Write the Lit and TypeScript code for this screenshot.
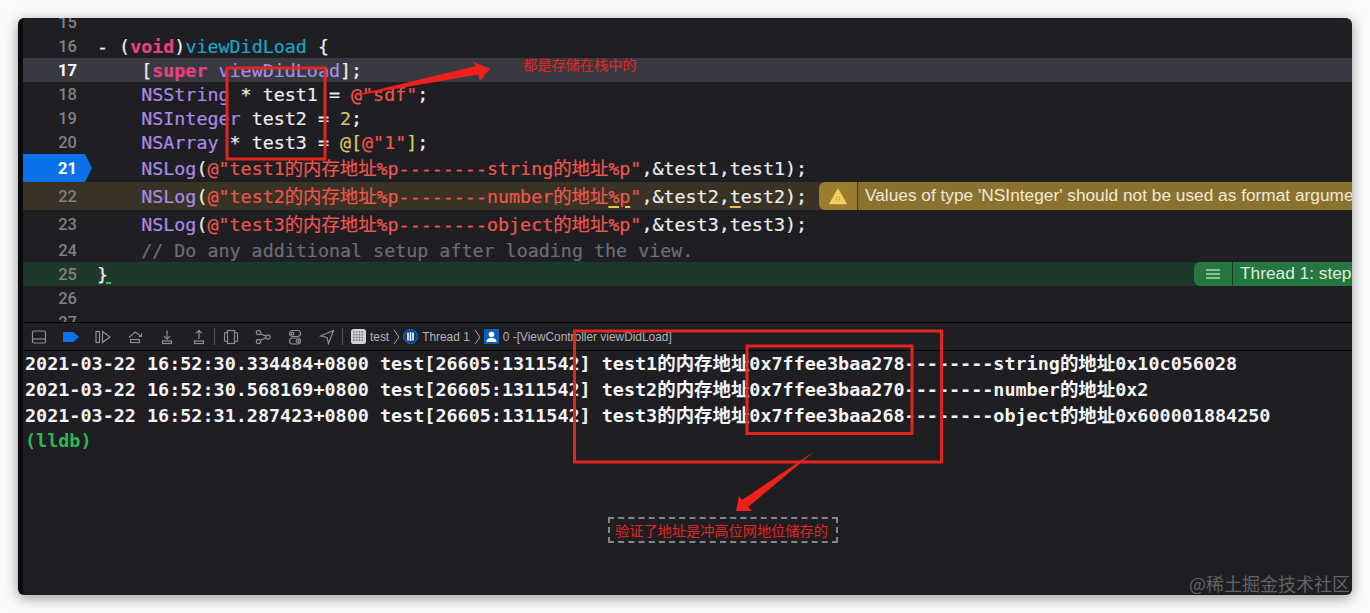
import { LitElement, html, css, svg } from "lit";
import { customElement } from "lit/decorators.js";

const icon = (body: unknown) => html`<svg class="ic" viewBox="0 0 16 16">${body}</svg>`;

@customElement("app-root")
export class AppRoot extends LitElement {
  static styles = css`
    :host { display: block; position: relative; width: 1370px; height: 613px; background: #fbfbfb; overflow: hidden; padding: 18px 18px 18px 18px; box-sizing: border-box; }
    .win { height: 577px; border-radius: 6px; overflow: hidden; background: #1e1e23; border-left: 5px solid #0b0b0d; box-shadow: 0 3px 14px rgba(0,0,0,.4); display: flex; flex-direction: column; box-sizing: border-box; }
    .editor { height: 304px; flex: none; overflow: hidden; font-family: "DejaVu Sans Mono", "Noto Sans CJK SC", monospace; font-size: 18.35px; color: #eeeef0; }
    .rows { margin-top: -8px; }
    .row { position: relative; display: flex; align-items: center; height: 24px; white-space: pre; }
    .tall { height: 28px; }
    .tall .code { margin-top: -2px; }
    .num { flex: none; width: 54px; margin-right: 20px; text-align: right; font: 500 16.5px Roboto, sans-serif; color: #808085; position: relative; }
    .code { flex: none; position: relative; -webkit-text-stroke: 0.2px currentColor; }
    .cur { background: #393a41; }
    .cur .num { color: #fff; font-weight: 700; }
    .warnrow { background: #383325; }
    .greenrow { background: #1e392a; }
    .bp { position: absolute; left: 0; top: 0; width: 69px; height: 28px; background: #0a71e8; clip-path: polygon(0 0, 62px 0, 69px 14px, 62px 28px, 0 28px); }
    .bpnum { color: #fff; font-weight: 700; }
    .k { color: #e9417f; font-weight: 700; }
    .m { color: #1aa6c4; }
    .c { color: #a98bea; }
    .s { color: #f0564f; }
    .y { color: #d8c868; }
    .g { color: #6a6e78; }
    .u { text-decoration: underline #e8c24a 2px; text-underline-offset: 3px; }
    .caret { display: inline-block; width: 5px; height: 2px; background: #2ec45a; margin-left: -2px; vertical-align: -3px; }
    .pill { position: absolute; top: 0; bottom: 0; display: flex; align-items: stretch; font-family: "Liberation Sans", Arial, sans-serif; overflow: hidden; white-space: nowrap; right: 0; }
    .warn { left: 796px; color: #f1ead6; font-size: 17.3px; }
    .warn .lead { background: #9a7d33; border-radius: 6px 0 0 6px; }
    .warn .msg { background: #8a7130; }
    .thread { left: 1171px; color: #d9ecdf; font-size: 17.3px; }
    .thread .lead { background: #25773f; border-radius: 6px 0 0 6px; }
    .thread .msg { background: #25773f; }
    .lead { flex: none; width: 38px; margin-right: 1px; display: flex; align-items: center; justify-content: center; }
    .msg { flex: 1; padding-left: 7px; line-height: 27px; overflow: hidden; }
    .thread .msg { line-height: 23px; }
    .bar { flex: none; height: 29px; box-sizing: border-box; border-top: 1px solid #050506; border-bottom: 1px solid #050506; display: flex; align-items: center; background: #1e1e23; font: 11.9px "Liberation Sans", sans-serif; color: #b4b4b8; white-space: nowrap; }
    .btn { flex: none; width: 32px; display: flex; justify-content: center; align-items: center; }
    .ic { width: 16px; height: 16px; fill: none; stroke: #8e8e93; stroke-width: 1.2; display: block; }
    .sep { flex: none; width: 1px; height: 17px; background: #55555a; margin-left: -1px; }
    .crumb { margin-left: 8px; display: flex; align-items: center; }
    .crumb svg { flex: none; display: block; }
    .crumb span { margin-left: 4px; }
    .chev { width: 7px; height: 16px; fill: none; stroke: #a5a5a9; stroke-width: 1; margin: 0 3px 0 4px; }
    .console { flex: 1; padding: 0 0 0 2px; font: 700 18.43px/26px "DejaVu Sans Mono", "Noto Sans CJK SC", monospace; color: #f4f4f5; white-space: pre; overflow: hidden; }
    .lldb { color: #2fb457; line-height: 22px; margin-top: 1px; }
    .over { position: absolute; left: 0; top: 0; pointer-events: none; }
    .note { position: absolute; font: 14.2px "Noto Sans CJK SC", sans-serif; color: #e3241f; white-space: nowrap; line-height: 20px; }
    .note1 { left: 523px; top: 54px; }
    .note2 { left: 608px; top: 517px; width: 230px; height: 26px; box-sizing: border-box; border: 2px dashed #858585; padding-left: 5px; line-height: 22px; }
    .wm { position: absolute; right: 20px; top: 570px; font: 18px/26px "Noto Sans CJK SC", sans-serif; color: #626265; white-space: nowrap; }
  `;

  private log(n: string, tail: string, u = false) {
    return html`<span class="c">NSLog</span>(<span class="s">@"test${n}的内存地址%p--------${tail}的地址${u ? html`<span class="u">%p</span>` : "%p"}"</span>,&amp;test${n},${u ? html`<span class="u">t</span>est${n}` : `test${n}`});`;
  }

  render() {
    const tools = [
      svg`<rect x="1.5" y="2" width="13" height="12" rx="1.5"/><path d="M1.5 10h13"/>`,
      svg`<path d="M0 3h10.5L16 8l-5.5 5H0z" fill="#0a71e8" stroke="none"/>`,
      svg`<rect x="1" y="2.5" width="3.5" height="11"/><path d="M7.5 2.5L15 8l-7.5 5.5z"/>`,
      svg`<path d="M2 8.5L8.2 3 14.5 7.5M14.5 4.5v3h-3"/><rect x="3.5" y="10.5" width="9" height="3"/>`,
      svg`<path d="M8 1.5v8.5M5 7.2L8 10.2l3-3"/><rect x="3.5" y="12" width="9" height="2.5"/>`,
      svg`<path d="M8 10V1.5M5 4.3L8 1.3l3 3"/><rect x="3.5" y="12" width="9" height="2.5"/>`,
    ];
    const tools2 = [
      svg`<rect x="4.5" y="1.5" width="7" height="13"/><path d="M4.5 3.5h-2a1 1 0 0 0-1 1v7a1 1 0 0 0 1 1h2M11.5 3.5h2a1 1 0 0 1 1 1v7a1 1 0 0 1-1 1h-2"/>`,
      svg`<circle cx="3.5" cy="3.5" r="2.2"/><circle cx="3.5" cy="12.5" r="2.2"/><circle cx="13" cy="8" r="2.2"/><path d="M5.4 4.7l5.6 2.4M5.4 11.3l5.6-2.4"/>`,
      svg`<rect x="2.5" y="1.5" width="11" height="6" rx="3"/><rect x="2.5" y="9" width="11" height="6" rx="3"/><circle cx="5.5" cy="4.5" r="1.4"/><circle cx="10.5" cy="12" r="1.4"/>`,
      svg`<path d="M14.5 1.5L1.5 7l6.5 1.5 1.5 6z"/>`,
    ];
    const dots = [];
    for (let x = 3; x <= 12; x += 3) for (let y = 3; y <= 12; y += 3) dots.push(svg`<circle cx="${x}" cy="${y}" r="1" fill="#77777a"/>`);
    const time = ["30.334484", "30.568169", "31.287423"];
    const tails = [["1", "string", "0x7ffee3baa278", "0x10c056028"], ["2", "number", "0x7ffee3baa270", "0x2"], ["3", "object", "0x7ffee3baa268", "0x600001884250"]];
    return html`
      <div class="win">
        <div class="editor"><div class="rows">
          <div class="row"><div class="num">15</div></div>
          <div class="row"><div class="num">16</div><div class="code">- (<span class="k">void</span>)<span class="m">viewDidLoad</span> {</div></div>
          <div class="row cur"><div class="num">17</div><div class="code">    [<span class="k">super</span> <span class="c">viewDidLoad</span>];</div></div>
          <div class="row"><div class="num">18</div><div class="code">    <span class="c">NSString</span> * test1 = <span class="s">@"sdf"</span>;</div></div>
          <div class="row"><div class="num">19</div><div class="code">    <span class="c">NSInteger</span> test2 = <span class="y">2</span>;</div></div>
          <div class="row"><div class="num">20</div><div class="code">    <span class="c">NSArray</span> * test3 = <span class="y">@[</span><span class="s">@"1"</span><span class="y">]</span>;</div></div>
          <div class="row tall"><div class="bp"></div><div class="num bpnum">21</div><div class="code">    ${this.log("1", "string")}</div></div>
          <div class="row tall warnrow"><div class="num">22</div><div class="code">    ${this.log("2", "number", true)}</div>
            <div class="pill warn"><div class="lead"><svg width="18" height="17" viewBox="0 0 18 17"><path d="M9 1.5L17 15.5H1z" fill="#f5cf55" stroke="#f5cf55" stroke-width="1.5" stroke-linejoin="round"/><circle cx="9" cy="10.5" r="2" fill="#b8983f"/><circle cx="9" cy="10.5" r="1" fill="#fff"/></svg></div><div class="msg">Values of type 'NSInteger' should not be used as format arguments; add an explicit cast</div></div>
          </div>
          <div class="row tall"><div class="num">23</div><div class="code">    ${this.log("3", "object")}</div></div>
          <div class="row"><div class="num">24</div><div class="code g">    // Do any additional setup after loading the view.</div></div>
          <div class="row greenrow"><div class="num">25</div><div class="code">}<span class="caret"></span></div>
            <div class="pill thread"><div class="lead"><svg width="14" height="10" viewBox="0 0 14 10" fill="none" stroke="#a8d8b6" stroke-width="1.4"><path d="M0 1h14M0 5h14M0 9h14"/></svg></div><div class="msg">Thread 1: step over</div></div>
          </div>
          <div class="row"><div class="num">26</div></div>
          <div class="row"><div class="num">27</div></div>
        </div></div>
        <div class="bar">
          ${tools.map((t) => html`<div class="btn">${icon(t)}</div>`)}
          <div class="sep"></div>
          ${tools2.map((t) => html`<div class="btn">${icon(t)}</div>`)}
          <div class="sep"></div>
          <div class="crumb">
            <svg width="15" height="15" viewBox="0 0 16 16"><rect width="16" height="16" rx="3" fill="#d4d4d6"/>${dots}</svg><span>test</span>
            <svg class="chev" viewBox="0 0 7 16"><path d="M1 1l5 7-5 7"/></svg>
            <svg width="15" height="15" viewBox="0 0 15 15"><circle cx="7.5" cy="7.5" r="7" fill="#0d3f7e" stroke="#1a6fd0"/><path d="M5 3.5v8M7.5 3v9M10 3.5v8" stroke="#fff" stroke-width="1.6"/></svg><span>Thread 1</span>
            <svg class="chev" viewBox="0 0 7 16"><path d="M1 1l5 7-5 7"/></svg>
            <svg width="15" height="15" viewBox="0 0 15 15"><rect width="15" height="15" fill="#0f5fb8"/><circle cx="7.5" cy="5.5" r="2.8" fill="#fff"/><path d="M2.5 13c0-3 2-4 5-4s5 1 5 4z" fill="#fff"/></svg><span>0 -[ViewController viewDidLoad]</span>
          </div>
        </div>
        <div class="console">${tails.map((t, i) => html`<div>2021-03-22 16:52:${time[i]}+0800 test[26605:1311542] test${t[0]}的内存地址${t[2]}--------${t[1]}的地址${t[3]}</div>`)}<div class="lldb">(lldb)</div></div>
      </div>
      <svg class="over" width="1370" height="613" fill="none" stroke="#e3241f" stroke-width="3">
        <rect x="227" y="68" width="98" height="91"/>
        <rect x="574.5" y="331" width="367" height="131"/>
        <rect x="747" y="346" width="165" height="87.5"/>
        <path d="M343 98L476 66 473 62 490 68.5 480 81 478 74.5z" fill="#f0201c" stroke="none"/>
        <path d="M815 451L742 500 739 496 736 511 752 511 748 507z" fill="#f0201c" stroke="none"/>
      </svg>
      <div class="note note1">都是存储在栈中的</div>
      <div class="note note2">验证了地址是冲高位网地位储存的</div>
      <div class="wm">@稀土掘金技术社区</div>
    `;
  }
}
